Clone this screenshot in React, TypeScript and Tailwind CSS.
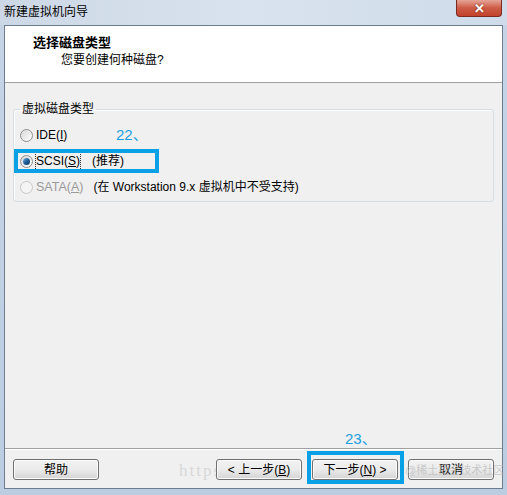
import React from "react";

const FONT = { fontFamily: '"Liberation Sans", "Noto Sans CJK SC", sans-serif' };

function Radio({ checked, disabled }: { checked?: boolean; disabled?: boolean }) {
  return (
    <span
      className={
        "relative inline-flex h-[13px] w-[13px] items-center justify-center rounded-full border " +
        (disabled
          ? "border-[#c8c8c8] bg-[#f4f4f4]"
          : "border-[#8e8f8f] bg-gradient-to-br from-[#d8d8d8] to-[#ffffff]")
      }
    >
      {checked && (
        <span className="h-[7px] w-[7px] rounded-full bg-gradient-to-br from-[#7ab4df] via-[#1f5f9a] to-[#0c3a66]" />
      )}
    </span>
  );
}

function Btn({ children }: { children: React.ReactNode }) {
  return (
    <div className="flex h-[21px] w-[86px] items-center justify-center rounded-[3px] border border-[#707070] bg-gradient-to-b from-[#f2f2f2] via-[#ebebeb] to-[#d4d4d4] text-[12px] text-black shadow-[inset_0_0_0_1px_#fcfcfc]">
      {children}
    </div>
  );
}

export default function App() {
  return (
    <div
      className="relative flex h-[495px] w-[507px] flex-col overflow-hidden bg-gradient-to-b from-[#c6d4e6] to-[#bccde2]"
      style={FONT}
    >
      {/* title bar */}
      <div className="relative flex h-[25px] items-start bg-gradient-to-r from-[#cdd8e6] via-[#d9e3ef] to-[#cfdbe9]">
        <span className="ml-[4px] mt-[5px] text-[12px] leading-[14px] text-black">新建虚拟机向导</span>
        <div className="absolute right-[5px] top-0 flex h-[17px] w-[46px] items-center justify-center rounded-b-[4px] border border-t-0 border-[#7a2a20] bg-gradient-to-b from-[#e5a597] via-[#cc5b45] to-[#c2412b]">
          <span className="text-[13px] font-bold leading-none text-white" style={{ textShadow: "0 0 2px #6b1d10" }}>
            ✕
          </span>
        </div>
      </div>

      {/* content */}
      <div className="mx-[4px] flex h-[464px] w-[499px] flex-col border border-[#6f7c8d]">
        {/* header */}
        <div className="flex h-[57px] flex-col border-b border-[#a0a0a0] bg-white">
          <div className="ml-[28px] mt-[9px] text-[13px] font-bold leading-[16px] text-black">选择磁盘类型</div>
          <div className="ml-[56px] mt-[1px] text-[12px] leading-[16px] text-black">您要创建何种磁盘?</div>
        </div>

        {/* body */}
        <div className="relative flex flex-1 flex-col bg-[#f0f0f0] px-[8px] pt-[19px]">
          <fieldset className="h-[100px] rounded-[3px] border border-[#d5dfe5] shadow-[inset_1px_1px_0_#ffffff]">
            <legend className="ml-[6px] px-[2px] text-[12px] leading-[14px] text-black">虚拟磁盘类型</legend>
            <div className="flex flex-col pl-[6px] pt-[6px]">
              <div className="flex h-[26px] items-center gap-[3px]">
                <Radio />
                <span className="text-[12px] text-black">
                  IDE(<span className="underline">I</span>)
                </span>
              </div>
              <div className="flex h-[26px] items-center gap-[3px]">
                <Radio checked />
                <span className="text-[12px] text-black outline-1 outline-dotted outline-[#333]">
                  SCSI(<span className="underline">S</span>)
                </span>
                <span className="ml-[9px] text-[12px] text-black">(推荐)</span>
              </div>
              <div className="flex h-[26px] items-center gap-[3px]">
                <Radio disabled />
                <span className="text-[12.5px] text-[#9a9a9a]">
                  SATA(<span className="underline">A</span>)
                </span>
                <span className="ml-[7px] text-[12px] text-black">(在 Workstation 9.x 虚拟机中不受支持)</span>
              </div>
            </div>
          </fieldset>

          {/* annotation 22 */}
          <span className="absolute left-[111px] top-[44px] text-[15px] leading-[16px] text-[#1aa0e0]">22、</span>
          <div className="absolute left-[9px] top-[66px] h-[24px] w-[145px] border-[4px] border-[#0aa0e6]" />

          {/* annotation 23 */}
          <span className="absolute left-[340px] top-[348px] text-[15px] leading-[16px] text-[#1aa0e0]">23、</span>
        </div>

        {/* footer */}
        <div className="relative flex h-[40px] items-start border-t border-[#a0a0a0] bg-[#f0f0f0] px-[8px] pt-[10px] shadow-[inset_0_1px_0_#ffffff]">
          <span
            className="absolute left-[174px] top-[9px] whitespace-nowrap text-[17px] tracking-[2px] text-[#d8d8d8]"
            style={{ fontFamily: '"Liberation Serif", serif' }}
          >
            https://
          </span>
          <div className="relative">
            <Btn>帮助</Btn>
          </div>
          <div className="flex-1" />
          <div className="relative flex gap-[10px]">
            <Btn>
              <span>&lt; 上一步(<span className="underline">B</span>)</span>
            </Btn>
            <Btn>
              <span>下一步(<span className="underline">N</span>) &gt;</span>
            </Btn>
            <Btn>取消</Btn>
            <div className="absolute left-[91px] top-[-8px] h-[33px] w-[97px] border-[4px] border-[#0aa0e6]" />
            <span className="absolute left-[189px] top-[4px] whitespace-nowrap text-[11px] leading-[14px] text-[#b8b8b8]/70">
              @稀土掘金技术社区
            </span>
          </div>
        </div>
      </div>
    </div>
  );
}
